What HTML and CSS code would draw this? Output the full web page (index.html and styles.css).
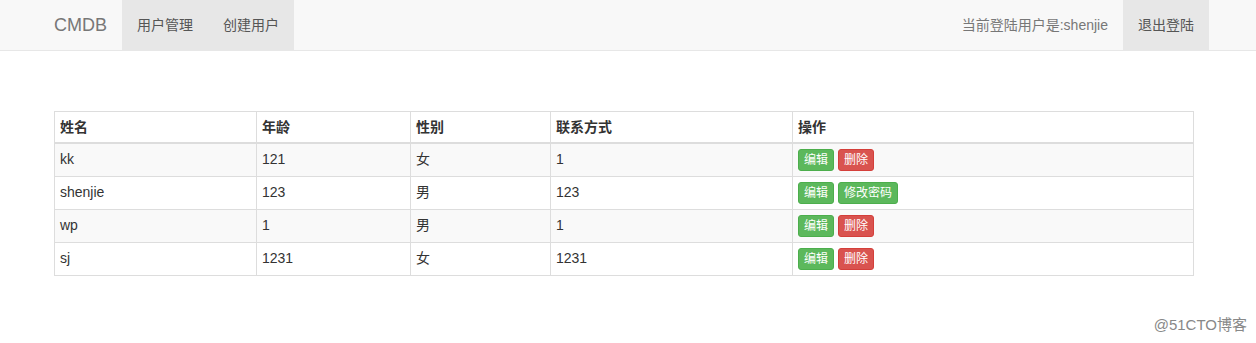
FILE: index.html
```html
<!DOCTYPE html>
<html lang="zh">
<head>
    <meta charset="UTF-8">
    <title>CMDB - 用户管理</title>
    <link rel="stylesheet" href="styles.css">
</head>
<body>

    <nav class="navbar">
        <div class="container nav-inner">
            <div class="nav-left">
                <a class="brand" href="#">CMDB</a>
                <a class="nav-link active" href="#">用户管理</a>
                <a class="nav-link active" href="#">创建用户</a>
            </div>
            <div class="nav-right">
                <span class="nav-text">当前登陆用户是:shenjie</span>
                <a class="nav-link active" href="#">退出登陆</a>
            </div>
        </div>
    </nav>

    <div class="container">
        <table class="user-table">
            <thead>
                <tr>
                    <th class="c-name">姓名</th>
                    <th class="c-age">年龄</th>
                    <th class="c-sex">性别</th>
                    <th class="c-tel">联系方式</th>
                    <th>操作</th>
                </tr>
            </thead>
            <tbody>
                <tr>
                    <td>kk</td>
                    <td>121</td>
                    <td>女</td>
                    <td>1</td>
                    <td><button class="btn btn-ok">编辑</button> <button class="btn btn-del">删除</button></td>
                </tr>
                <tr>
                    <td>shenjie</td>
                    <td>123</td>
                    <td>男</td>
                    <td>123</td>
                    <td><button class="btn btn-ok">编辑</button> <button class="btn btn-ok">修改密码</button></td>
                </tr>
                <tr>
                    <td>wp</td>
                    <td>1</td>
                    <td>男</td>
                    <td>1</td>
                    <td><button class="btn btn-ok">编辑</button> <button class="btn btn-del">删除</button></td>
                </tr>
                <tr>
                    <td>sj</td>
                    <td>1231</td>
                    <td>女</td>
                    <td>1231</td>
                    <td><button class="btn btn-ok">编辑</button> <button class="btn btn-del">删除</button></td>
                </tr>
            </tbody>
        </table>
    </div>

    <div class="watermark">@51CTO博客</div>

</body>
</html>
```

FILE: styles.css
```css
body {
    margin: 0;
    font-family: "Liberation Sans", Arial, "Noto Sans CJK SC", sans-serif;
    font-size: 14px;
    line-height: 20px;
    color: #333;
    background: #fff;
}
a {
    text-decoration: none;
}
.container {
    width: 1140px;
    margin-left: 39px;
    padding: 0 15px;
}
.navbar {
    height: 50px;
    background: #f8f8f8;
    border-bottom: 1px solid #e7e7e7;
}
.nav-inner {
    display: flex;
    justify-content: space-between;
    height: 50px;
}
.nav-left, .nav-right {
    display: flex;
    align-items: stretch;
}
.nav-left {
    margin-left: -15px;
}
.nav-right {
    margin-right: -15px;
}
.brand {
    padding: 15px;
    font-size: 18px;
    line-height: 20px;
    color: #777;
}
.nav-link {
    padding: 15px;
    color: #777;
}
.nav-link.active {
    background: #e7e7e7;
    color: #555;
}
.nav-text {
    padding: 15px;
    color: #777;
}
.user-table {
    width: 1140px;
    margin-top: 60px;
    border-collapse: collapse;
    border: 1px solid #ddd;
}
.user-table th, .user-table td {
    border: 1px solid #ddd;
    padding: 5px;
    text-align: left;
    vertical-align: top;
}
.user-table th {
    font-weight: bold;
    border-bottom: 2px solid #ddd;
}
.user-table tbody tr:nth-child(odd) {
    background: #f9f9f9;
}
.c-name { width: 191px; }
.c-age { width: 143px; }
.c-sex { width: 129px; }
.c-tel { width: 231px; }
.btn {
    padding: 1px 5px;
    font-family: inherit;
    font-size: 12px;
    line-height: 18px;
    color: #fff;
    border-radius: 3px;
    border: 1px solid;
    cursor: pointer;
}
.btn-ok {
    background: #5cb85c;
    border-color: #4cae4c;
}
.btn-del {
    background: #d9534f;
    border-color: #d43f3a;
}
.watermark {
    position: absolute;
    right: 9px;
    bottom: 8px;
    font-size: 15px;
    color: #888;
}
```
